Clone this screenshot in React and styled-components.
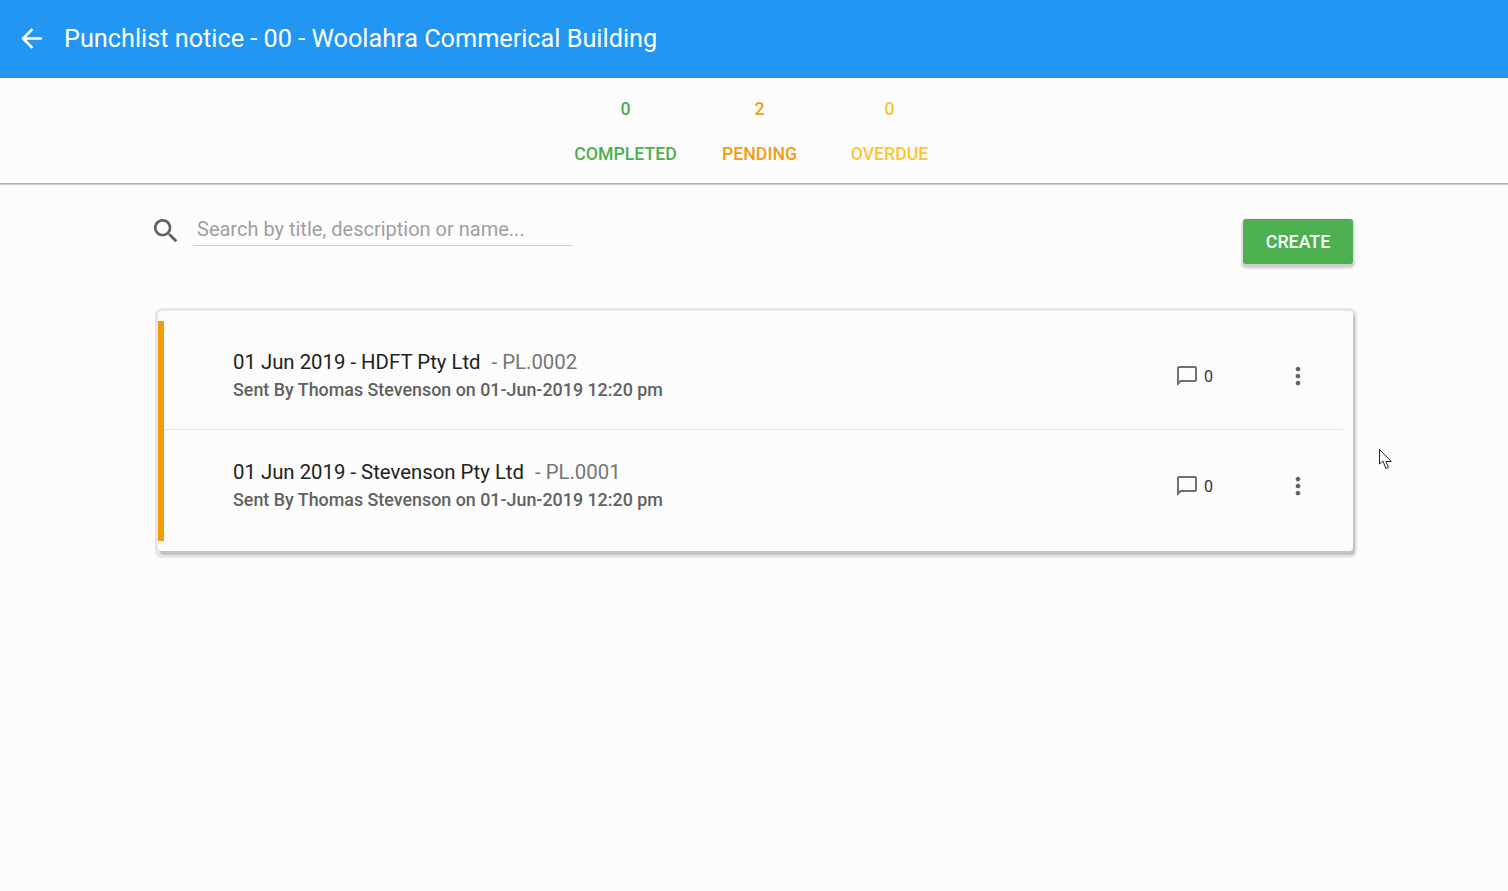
import React from "react";
import styled, { createGlobalStyle } from "styled-components";

const GlobalStyle = createGlobalStyle`
  html, body {
    margin: 0;
    padding: 0;
    height: 100%;
    background-color: #fcfcfc;
    font-family: Roboto, "Liberation Sans", sans-serif;
  }
`;

const Page = styled.div`
  position: relative;
  min-height: 891px;
  overflow: hidden;
`;

const AppBar = styled.header`
  height: 78px;
  box-sizing: border-box;
  padding: 0 0 2px 16px;
  display: flex;
  align-items: center;
  gap: 17px;
  background-color: #2196f3;
  color: white;
`;

const BackIcon = styled.svg`
  width: 31px;
  height: 31px;
  fill: white;
`;

const Title = styled.h1`
  margin: 0;
  font-size: 25.25px;
  font-weight: 400;
`;

const Stats = styled.section`
  height: 106px;
  box-sizing: border-box;
  padding-left: 574px;
  display: flex;
  border-bottom: 1px solid #b0b0b0;
  box-shadow: 0 1px 1px rgba(0, 0, 0, 0.18);
`;

const Stat = styled.div`
  width: ${(props) => props.width}px;
  padding-top: 21px;
  display: flex;
  flex-direction: column;
  align-items: center;
  gap: 25px;
  font-size: 17.7px;
  line-height: 20px;
  font-weight: 500;
  color: ${(props) => props.color};
`;

const Content = styled.main`
  padding: 35px 155px 0 158px;
`;

const Toolbar = styled.div`
  display: flex;
  justify-content: space-between;
  align-items: flex-start;
  margin-bottom: 47px;
`;

const SearchBox = styled.div`
  display: flex;
  gap: 11px;
  margin-left: -8px;
`;

const SearchIcon = styled.svg`
  width: 32px;
  height: 32px;
  margin-top: -4px;
  fill: #616161;
`;

const SearchInput = styled.input`
  width: 380px;
  height: 27px;
  box-sizing: border-box;
  padding: 0 4px 7px;
  border: 0;
  border-bottom: 1px solid #cfcfcf;
  outline: none;
  background: transparent;
  font-family: inherit;
  font-size: 20px;
  color: #333;

  &::placeholder {
    color: #a0a0a0;
    opacity: 1;
  }
`;

const CreateButton = styled.button`
  width: 110px;
  height: 45px;
  border: 0;
  border-radius: 3px;
  background-color: #4caf50;
  color: white;
  font-family: inherit;
  font-size: 17.8px;
  font-weight: 500;
  box-shadow: 0 3px 1px 0 #cdcdcd, 0 2.5px 1px 2px #e2e2e2, 0 -1px 0 #ececec;
`;

const Card = styled.section`
  padding: 10px 10px 10px 0;
  background-color: #fcfcfc;
  border-radius: 4px;
  box-shadow: 2px 3.5px 1px #c2c2c2, 0.5px 3.5px 1px 3px #e6e6e6, 0.5px 0 1px 3px #e6e6e6;
`;

const Row = styled.article`
  height: 110px;
  box-sizing: border-box;
  padding: 0 31px 0 69px;
  display: flex;
  align-items: center;
  border-left: 6px solid #f39c07;
`;

const Divider = styled.div`
  height: 1px;
  margin: -2px 0 1px 6px;
  position: relative;
  background-color: #e6e6e6;
`;

const RowText = styled.div`
  flex: 1;
`;

const RowTitle = styled.div`
  font-size: 20.35px;
  line-height: 26px;
  color: #212121;
`;

const Reference = styled.span`
  margin-left: 6px;
  color: #757575;
`;

const RowMeta = styled.div`
  margin-top: 2px;
  font-size: 17.87px;
  line-height: 26px;
  font-weight: 500;
  color: #616161;
`;

const Comments = styled.div`
  width: 109px;
  padding-left: 1px;
  display: flex;
  align-items: center;
  gap: 5px;
  font-size: 16px;
  color: #333;
`;

const CommentIcon = styled.svg`
  width: 24px;
  height: 24px;
  fill: #6f6f6f;
`;

const MenuIcon = styled.svg`
  width: 28px;
  height: 28px;
  fill: #616161;
`;

const Cursor = styled.svg`
  position: absolute;
  left: 1378px;
  top: 448px;
  width: 16px;
  height: 24px;
`;

const stats = [
  { label: "COMPLETED", value: 0, color: "#4caf50", width: 103 },
  { label: "PENDING", value: 2, color: "#f39c12", width: 165 },
  { label: "OVERDUE", value: 0, color: "#fcc42f", width: 95 },
];

const notices = [
  { id: "PL.0002", title: "01 Jun 2019 - HDFT Pty Ltd" },
  { id: "PL.0001", title: "01 Jun 2019 - Stevenson Pty Ltd" },
];

function App() {
  return (
    <Page>
      <GlobalStyle />
      <AppBar>
        <BackIcon viewBox="0 0 24 24">
          <path d="M20 11H7.83l5.59-5.59L12 4l-8 8 8 8 1.41-1.41L7.83 13H20v-2z" />
        </BackIcon>
        <Title>Punchlist notice - 00 - Woolahra Commerical Building</Title>
      </AppBar>
      <Stats>
        {stats.map((stat) => (
          <Stat key={stat.label} color={stat.color} width={stat.width}>
            <span>{stat.value}</span>
            <span>{stat.label}</span>
          </Stat>
        ))}
      </Stats>
      <Content>
        <Toolbar>
          <SearchBox>
            <SearchIcon viewBox="0 0 24 24">
              <path d="M15.5 14h-.79l-.28-.27C15.41 12.59 16 11.11 16 9.5 16 5.91 13.09 3 9.5 3S3 5.91 3 9.5 5.91 16 9.5 16c1.61 0 3.09-.59 4.23-1.57l.27.28v.79l5 4.99L20.49 19l-4.99-5zm-6 0C7.01 14 5 11.99 5 9.5S7.01 5 9.5 5 14 7.01 14 9.5 11.99 14 9.5 14z" />
            </SearchIcon>
            <SearchInput placeholder="Search by title, description or name..." />
          </SearchBox>
          <CreateButton>CREATE</CreateButton>
        </Toolbar>
        <Card>
          {notices.map((notice, index) => (
            <React.Fragment key={notice.id}>
              {index > 0 && <Divider />}
              <Row>
                <RowText>
                  <RowTitle>
                    {notice.title} <Reference>- {notice.id}</Reference>
                  </RowTitle>
                  <RowMeta>Sent By Thomas Stevenson on 01-Jun-2019 12:20 pm</RowMeta>
                </RowText>
                <Comments>
                  <CommentIcon viewBox="0 0 24 24">
                    <path d="M20 2H4c-1.1 0-2 .9-2 2v18l4-4h14c1.1 0 2-.9 2-2V4c0-1.1-.9-2-2-2zm0 14H5.2L4 17.2V4h16v12z" />
                  </CommentIcon>
                  0
                </Comments>
                <MenuIcon viewBox="0 0 24 24">
                  <path d="M12 8c1.1 0 2-.9 2-2s-.9-2-2-2-2 .9-2 2 .9 2 2 2zm0 2c-1.1 0-2 .9-2 2s.9 2 2 2 2-.9 2-2-.9-2-2-2zm0 6c-1.1 0-2 .9-2 2s.9 2 2 2 2-.9 2-2-.9-2-2-2z" />
                </MenuIcon>
              </Row>
            </React.Fragment>
          ))}
        </Card>
      </Content>
      <Cursor viewBox="0 0 16 24">
        <path d="M1.5 1.5v14.5l3.4-3 3 7.5 2.6-1.2-2.7-5.8h5.4z" fill="white" stroke="#222" strokeWidth="1" />
      </Cursor>
    </Page>
  );
}

export default App;
